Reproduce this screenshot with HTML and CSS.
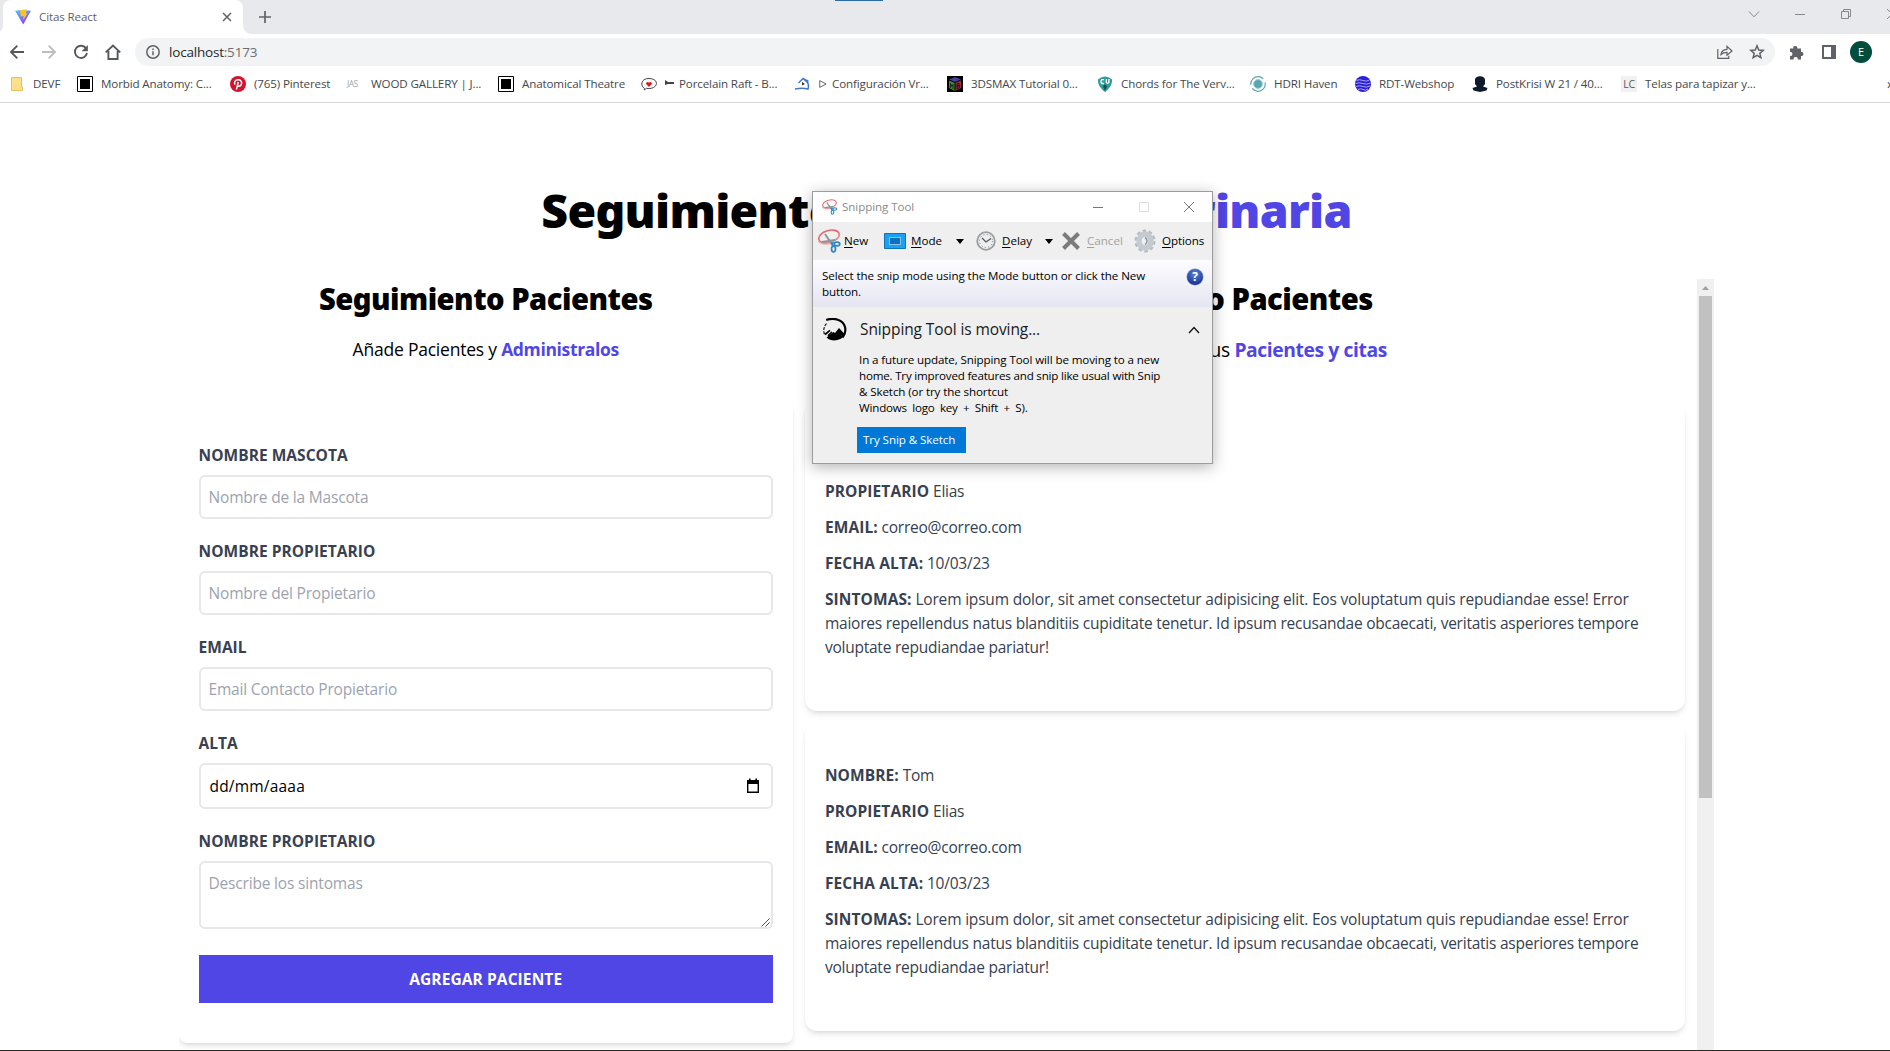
FILE: index.html
```html
<!DOCTYPE html>
<html lang="es">
<head>
<meta charset="utf-8">
<title>Citas React</title>
<link rel="stylesheet" href="styles.css">
</head>
<body>
<div class="screen">

<header class="browser">
  <div class="tabstrip">
    <div class="tab">
      <svg class="i16" viewBox="0 0 16 16"><defs><linearGradient id="vg" x1="0" y1="0" x2=".6" y2="1"><stop offset="0" stop-color="#41d1ff"/><stop offset="1" stop-color="#a335f0"/></linearGradient></defs><path d="M0 1.8 7 .9l9 .9L8.2 15.6z" fill="url(#vg)"/><path d="M5 1.2 11.5.2 11 4.4l1.3.2L8.3 11 8.5 7 5.8 7.4z" fill="#ffc21e"/></svg>
      <span class="tab-title">Citas React</span>
      <svg class="tab-close" viewBox="0 0 10 10"><path d="M1 1l8 8M9 1 1 9"/></svg>
    </div>
    <svg class="newtab" viewBox="0 0 12 12"><path d="M6 0v12M0 6h12"/></svg>
    <div class="strip-mark"></div>
    <div class="winbtns">
      <svg viewBox="0 0 12 12"><path d="M1 3.5 6 8.8l5-5.3"/></svg>
      <svg viewBox="0 0 12 12"><path d="M1 6.5h10"/></svg>
      <svg viewBox="0 0 12 12"><path d="M1.5 3.5h7v7h-7zM3.5 3.5v-2h7v7h-2"/></svg>
      <svg viewBox="0 0 12 12"><path d="M1 1l10 10M11 1 1 11"/></svg>
    </div>
  </div>

  <div class="toolbar">
    <div class="nav">
      <svg viewBox="0 0 16 16"><path d="M15 8H2M8.3 1.6 2 8l6.3 6.4"/></svg>
      <svg class="off" viewBox="0 0 16 16"><path d="M1 8h13M7.7 1.6 14 8l-6.3 6.4"/></svg>
      <svg viewBox="0 0 16 16"><path d="M13.2 4.6A6.1 6.1 0 1 0 14 9"/><path class="solid" d="M14.8 1v6.2H8.6z"/></svg>
      <svg viewBox="0 0 16 16"><path d="M.8 8.4 8 1.6l7.2 6.8M3.4 7v8h9.2V7"/></svg>
    </div>
    <div class="omnibox">
      <svg class="info" viewBox="0 0 14 14"><circle cx="7" cy="7" r="6.2"/><path d="M7 6.2v4M7 3.6v1.5"/></svg>
      <span class="url">localhost<i>:5173</i></span>
      <svg class="share" viewBox="0 0 16 16"><path d="M.8 5v9.3h11v-2.5M4 10.5c.4-3.4 2.4-5 6-5.2V2.4L15 7l-5 4.2V8.4C7.300 8.400 5.500 9 4 10.500z"/></svg>
      <svg class="star" viewBox="0 0 16 16"><path d="m8 1.800 1.750 4.200 4.500.380-3.420 2.950 1.050 4.400L8 11.380l-3.880 2.350 1.050-4.400L1.750 6.380l4.500-.380z"/></svg>
    </div>
    <svg class="puzzle" viewBox="0 0 15 15"><path d="M1 3.500h3.300a2 2 0 1 1 3.900 0H12v3.600a2 2 0 1 1 0 3.900v3.500H8.600a2 2 0 1 0-3.900 0H1v-3.600a2 2 0 1 0 0-3.900z"/></svg>
    <svg class="panel" viewBox="0 0 14 14"><path d="M1 1h12v12H1z" fill="none" stroke="#5f6368" stroke-width="2"/><path d="M9 1h4v12H9z" fill="#5f6368"/></svg>
    <div class="avatar">E</div>
  </div>

  <nav class="bookmarks">
    <a><svg class="i16" viewBox="0 0 16 16"><path d="M2.500 1.500h10v9.500h1v3.500h-11z" fill="#ffe08a" stroke="#e6c15c"/></svg>DEVF</a>
    <a><svg class="i16" viewBox="0 0 16 16"><path d="M.5.5h15v15H.5z" fill="#fff" stroke="#000"/><path d="M3 3h10v10H3z"/></svg>Morbid Anatomy: C...</a>
    <a><svg class="i16" viewBox="0 0 16 16"><circle cx="8" cy="8" r="8" fill="#d4122e"/><path d="M5.200 8.600C3.600 6.600 5 3.800 8.200 3.800c2.500 0 3.700 1.700 3.400 3.600-.3 2-1.600 3-2.800 2.800-.7-.1-1.100-.5-1.300-.9M8.300 6 6.400 13.500" fill="none" stroke="#fff" stroke-width="1.500"/></svg>(765) Pinterest</a>
    <a><span class="i16 jas">JAS</span>WOOD GALLERY | J...</a>
    <a><svg class="i16" viewBox="0 0 16 16"><path d="M.5.5h15v15H.5z" fill="#fff" stroke="#000"/><path d="M3 3h10v10H3z"/></svg>Anatomical Theatre</a>
    <a><svg class="i16" viewBox="0 0 16 16"><path d="M3.500 12.500C-1 9.500-.2 2.500 8 2.500s9.500 6.500 4.500 9c-2.500 1.300-5 1.200-7 .8L3.200 14z" fill="#fff" stroke="#444"/><path d="M8 11 5.300 8.200C4.400 6.600 6.800 5 8 6.800 9.200 5 11.600 6.600 10.700 8.200z" fill="#e01818"/></svg><span><svg class="dart" viewBox="0 0 9 6"><path d="M0 0l3 2h6v2H3L0 5z"/></svg>Porcelain Raft - B...</span></a>
    <a><svg class="i16" viewBox="0 0 16 16"><path d="M0 13c5-1 9-1 13 0 .8-3 .5-5-.5-6.500L8 2.500 3.500 7M8 2.500l5.500 3" fill="none" stroke="#3f78cf" stroke-width="1.500"/><path d="M7 6l3 2-3 1.500z" fill="#333"/></svg><span><svg class="tri" viewBox="0 0 9 10"><path d="M.8 1.200v7.600L8 5z"/></svg>Configuración Vr...</span></a>
    <a><svg class="i16" viewBox="0 0 16 16"><path d="M0 0h16v16H0z"/><path d="M8 1l6 2.500L8 6 2 3.500z" fill="#4540a0"/><path d="M2 4.500l5.500 2.300V15L2 12z" fill="#3d8a3a"/><path d="M8.500 6.800 14 4.500V12l-5.500 3z" fill="#a02a3a"/><path d="M3.500 12V7.500l1.200 3 1.300-2V13M10 13V8l2-.8v2l-2 1 2.500-.5v2z" fill="none" stroke="#111" stroke-width=".8"/></svg>3DSMAX Tutorial 0...</a>
    <a><svg class="i16" viewBox="0 0 16 16"><path d="M1 3.500Q8-2.500 15 3.500C15.500 8.500 12 13 8 16 4 13 .5 8.500 1 3.500z" fill="#2d9e97"/><path d="M7 3.600H4.800L4 5v1.500l1 1h2M9.300 3v3.500l1.200 1 1.400-1V3" fill="none" stroke="#fff" stroke-width="1.300"/><path d="M8 15l-2-5 2-1.500L10 10z" fill="#164b52"/></svg>Chords for The Verv...</a>
    <a><svg class="i16" viewBox="0 0 16 16"><circle cx="8" cy="8" r="7.300" fill="none" stroke="#5aa5b3" stroke-width="1.200" stroke-dasharray="18 4"/><circle cx="8" cy="8" r="4.400" fill="#5aa5b3" stroke="#9dcbd3"/></svg>HDRI Haven</a>
    <a><svg class="i16" viewBox="0 0 16 16"><circle cx="8" cy="8" r="8" fill="#2a1fd8"/><path d="M1.500 4.500q3-1.500 6.500 0t6.500-.5M.5 7.500q4-1.500 7.500 0t7.500-.5M1 10.500q3.500-1.500 7 0t7-.5M3 13.500q2.500-1.500 5 0t5-.5" fill="none" stroke="#b9b6ff" stroke-width=".9"/></svg>RDT-Webshop</a>
    <a><svg class="i16" viewBox="0 0 16 16"><path d="M3 4C3-1 13-1 13 4v4l-2 2.500 4.500 1.500-1 2.500-6.500 1.500-6.500-1.500L.5 12 5 10.500 3 8z" fill="#0d1b2a"/></svg>PostKrisi W 21 / 40...</a>
    <a><span class="i16 lc">LC</span>Telas para tapizar y...</a>
    <span class="more">»</span>
  </nav>
</header>

<main class="container">
  <h1>Seguimiento Pacientes <span>Veterinaria</span></h1>
  <div class="columns">
    <section class="left">
      <h2>Seguimiento Pacientes</h2>
      <p class="lead">Añade Pacientes y <b>Administralos</b></p>
      <form class="card form">
        <label>Nombre mascota</label>
        <div class="field ph">Nombre de la Mascota</div>
        <label>Nombre propietario</label>
        <div class="field ph">Nombre del Propietario</div>
        <label>Email</label>
        <div class="field ph">Email Contacto Propietario</div>
        <label>Alta</label>
        <div class="field date">dd/mm/aaaa<svg viewBox="0 0 14 16"><path d="M1.700 3.500h10.600v10.800H1.700z" fill="none" stroke="#000" stroke-width="1.400"/><path d="M1 2h12v4H1zM3 .500h1.600V3H3zM9.400.500H11V3H9.400z"/></svg></div>
        <label>Nombre propietario</label>
        <div class="field area ph">Describe los sintomas<svg viewBox="0 0 9 9"><path d="M.5 8.500l8-8M4.500 8.500l4-4"/></svg></div>
        <button type="button" class="submit">Agregar paciente</button>
      </form>
    </section>

    <section class="right">
      <div class="list">
        <h2>Listado Pacientes</h2>
        <p class="lead big">Administra tus <b>Pacientes y citas</b></p>
        <article class="card patient">
          <p><b>Nombre:</b> Tom</p>
          <p><b>Propietario</b> Elias</p>
          <p><b>Email:</b> correo@correo.com</p>
          <p><b>Fecha alta:</b> 10/03/23</p>
          <p><b>Sintomas:</b> <span>Lorem ipsum dolor, sit amet consectetur adipisicing elit. Eos voluptatum quis repudiandae esse! Error</span><br>maiores repellendus natus blanditiis cupiditate tenetur. Id ipsum recusandae obcaecati, veritatis asperiores tempore<br>voluptate repudiandae pariatur!</p>
        </article>
        <article class="card patient">
          <p><b>Nombre:</b> Tom</p>
          <p><b>Propietario</b> Elias</p>
          <p><b>Email:</b> correo@correo.com</p>
          <p><b>Fecha alta:</b> 10/03/23</p>
          <p><b>Sintomas:</b> <span>Lorem ipsum dolor, sit amet consectetur adipisicing elit. Eos voluptatum quis repudiandae esse! Error</span><br>maiores repellendus natus blanditiis cupiditate tenetur. Id ipsum recusandae obcaecati, veritatis asperiores tempore<br>voluptate repudiandae pariatur!</p>
        </article>
      </div>
      <div class="scrollbar">
        <svg viewBox="0 0 17 17"><path d="M5 11l3.500-4L12 11z" fill="#a0a0a0"/></svg>
        <div class="thumb"></div>
      </div>
    </section>
  </div>
</main>
<div class="taskbar"></div>

<svg class="defs">
  <symbol id="snip" viewBox="0 0 24 24"><g fill="none"><ellipse cx="12" cy="7.500" rx="10.500" ry="6" transform="rotate(-16 12 7.500)" stroke="#e8696d" stroke-width="1.600"/><path d="M22 4c1 4-3 8-9 9.500-5 1-10 .5-12-1.500 2 3 8 4.500 14 2" stroke="#f0a0a2"/><path d="M8 5l8 12M5 13l13-2" stroke="#8d9499" stroke-width="1.900"/><ellipse cx="16.500" cy="20" rx="2" ry="2.800" stroke="#2b86c8" stroke-width="1.700"/><ellipse cx="20" cy="15" rx="2.800" ry="1.900" stroke="#2b86c8" stroke-width="1.700"/><path d="M14.500 14l2 3.500M14 14h4" stroke="#2b86c8" stroke-width="1.500"/></g></symbol>
</svg>

<div class="snip">
  <div class="snip-title">
    <svg class="s16"><use href="#snip"/></svg>
    <span>Snipping Tool</span>
    <svg class="ctl" viewBox="0 0 12 12"><path d="M1 6.500h10"/></svg>
    <svg class="ctl dim" viewBox="0 0 12 12"><path d="M1.500 1.500h9v9h-9z"/></svg>
    <svg class="ctl" viewBox="0 0 12 12"><path d="M1 1l10 10M11 1 1 11"/></svg>
  </div>
  <div class="snip-tools">
    <svg class="s24"><use href="#snip"/></svg><span class="t-new"><u>N</u>ew</span>
    <svg class="mode" viewBox="0 0 22 16"><path d="M.5.5h21v15H.5z" fill="#1ba1f2" stroke="#1173b5"/><path d="M5.500 4.500h11v7h-11z" fill="#0f6fc0" stroke="#fff" stroke-dasharray="1 1"/></svg><span class="t-mode"><u>M</u>ode</span><i class="caret"></i>
    <svg class="clock" viewBox="0 0 20 20"><circle cx="10" cy="10" r="8.800" fill="#eceeef" stroke="#9b9fa2" stroke-width="1.800"/><circle cx="10" cy="10" r="6.500" fill="none" stroke="#777" stroke-dasharray="1 2.400"/><path d="M6 7l4 4 5-3.500" fill="none" stroke="#555" stroke-width="1.200"/></svg><span class="t-delay"><u>D</u>elay</span><i class="caret"></i>
    <svg class="cross" viewBox="0 0 18 18"><path d="M1.500 1.500l15 15M16.500 1.500l-15 15"/></svg><span class="t-cancel"><u>C</u>ancel</span>
    <svg class="gear" viewBox="0 0 22 24"><ellipse cx="11" cy="12" rx="9.300" ry="10.300" fill="none" stroke="#b3bbc2" stroke-width="2.400" stroke-dasharray="3.600 2.600"/><ellipse cx="11" cy="12" rx="6" ry="7" fill="#eef0f2" stroke="#c3cad0" stroke-width="5.400"/><path d="M11 8.500a4 4 0 0 1 0 7" stroke="#8d959c" stroke-width="1.500" fill="none"/></svg><span class="t-opt"><u>O</u>ptions</span>
  </div>
  <div class="snip-msg">
    <p>Select the snip mode using the Mode button or click the New<br>button.</p>
    <span class="help">?</span>
  </div>
  <div class="snip-body">
    <svg class="sketch" viewBox="0 0 24 23"><path d="M3.200 2C11-.5 20 1.500 22 9c1 4-.5 8-2.500 10.500" fill="none" stroke="#000" stroke-width="2.200"/><path d="M3.500 5.500C.5 9 .3 13 1.500 16.500" fill="none" stroke="#000" stroke-width="1.100" stroke-dasharray="3 1.200"/><path d="M3.500 19.500 10.500 14l1.500 1L16 10l6 6.500C18 23.500 8 24 3.500 19.500z"/><path d="M2 16.500l5-4.200M5 17.800l4-3.800" stroke="#000" stroke-width="1.700"/></svg>
    <div class="snip-copy">
      <h3>Snipping Tool is moving...</h3>
      <p><span class="wide">In a future update, Snipping Tool will be moving to a new</span><br>home. Try improved features and snip like usual with Snip<br><span class="wide">&amp; Sketch (or try the shortcut</span><br><span class="keys">Windows logo key + Shift + S).</span></p>
      <button type="button">Try Snip &amp; Sketch</button>
    </div>
    <svg class="up" viewBox="0 0 12 8"><path d="M1 7l5-5.500L11 7"/></svg>
  </div>
</div>

</div>
</body>
</html>
```
FILE: styles.css
```css
* { box-sizing: border-box; margin: 0; padding: 0; }
body { background: #fff; overflow: hidden; font-family: "Open Sans", "Noto Sans", sans-serif; }
.screen { position: relative; width: 1890px; height: 1051px; overflow: hidden; display: flex; flex-direction: column; }
svg { display: block; flex: none; }
.defs { position: absolute; width: 0; height: 0; }

/* Browser chrome */
.browser { height: 103px; flex: none; border-bottom: 1px solid #d6d8da; font-size: 11.6px; letter-spacing: -.13px; color: #45494d; }
.tabstrip { height: 34px; background: #e8e9ed; display: flex; padding-left: 3px; position: relative; }
.tab { width: 240px; background: #fff; border-radius: 8px 8px 0 0; display: flex; align-items: center; padding: 0 11px 0 12px; position: relative; }
.tab::before, .tab::after { content: ""; position: absolute; bottom: 0; width: 8px; height: 8px; }
.tab::before { left: -8px; background: radial-gradient(circle at 0 0, transparent 7.500px, #fff 8px); }
.tab::after { right: -8px; background: radial-gradient(circle at 100% 0, transparent 7.500px, #fff 8px); }
.i16 { width: 16px; height: 16px; flex: none; }
.tab-title { margin-left: 8px; flex: 1; color: #5f6368; line-height: 32px; }
.tab-close { width: 10px; height: 10px; stroke: #5f6368; stroke-width: 1.500; }
.newtab { width: 12px; height: 12px; margin: 11px 0 0 16px; stroke: #5f6368; stroke-width: 1.700; }
.strip-mark { position: absolute; left: 835px; top: 0; width: 48px; height: 1px; background: #2a6cab; }
.winbtns { display: flex; gap: 34px; margin: 8px -8px 0 auto; }
.winbtns svg { width: 12px; height: 12px; fill: none; stroke: #85888c; }

.toolbar { height: 36px; display: flex; align-items: center; padding-left: 9px; }
.nav { display: flex; gap: 16px; width: 126px; flex: none; }
.nav svg { width: 16px; height: 16px; fill: none; stroke: #55595e; stroke-width: 1.900; }
.nav .off { stroke: #bcbec1; }
.nav .solid { fill: #55595e; stroke: none; }
.omnibox { width: 1640px; flex: none; height: 28px; border-radius: 14px; background: #f1f3f4; display: flex; align-items: center; padding: 0 10px 0 11px; }
.info { width: 14px; height: 14px; fill: none; stroke: #5f6368; stroke-width: 1.500; }
.url { margin-left: 9px; flex: 1; font-size: 13.500px; letter-spacing: -.2px; line-height: 28px; color: #26282b; }
.url i { font-style: normal; color: #6a6e72; }
.share, .star { width: 16px; height: 16px; fill: none; stroke: #5f6368; stroke-width: 1.200; }
.star { margin-left: 16px; stroke-width: 1.500; }
.puzzle { width: 15px; height: 15px; margin-left: 14px; fill: #5f6368; }
.panel { width: 14px; height: 14px; margin-left: 18px; }
.avatar { width: 22px; height: 22px; flex: none; border-radius: 50%; background: #034d3c; color: #fff; text-align: center; line-height: 22px; font-size: 11px; margin-left: 14px; }

.bookmarks { height: 30px; margin-top: -1px; padding-left: 9px; display: grid; align-items: center; white-space: nowrap; line-height: 30px;
  grid-template-columns: 68px 153px 117px 151px 143px 154px 152px 150px 153px 105px 117px 149px 266px 20px; }
.bookmarks a { display: flex; align-items: center; gap: 8px; }
.bookmarks .dart, .bookmarks .tri { display: inline-block; margin-right: 5px; }
.dart { width: 9px; height: 6px; fill: #444; vertical-align: 2px; }
.tri { width: 8px; height: 10px; fill: none; stroke: #555; vertical-align: -1px; }
.jas { font-size: 8.500px; letter-spacing: -.6px; line-height: 16px; color: #a5a7a9; }
.lc { background: #f1f1f1; color: #55585b; font-size: 10.500px; line-height: 16px; text-align: center; letter-spacing: -.2px; }
.more { font-size: 14px; color: #45494d; }

/* Page */
.container { width: 1536px; margin: 80px 0 0 178.500px; height: 867px; overflow: hidden; flex: none; color: #000; }
h1 { font-family: "Noto Sans", "Open Sans", sans-serif; font-size: 46.500px; font-weight: 900; line-height: 48px; height: 48px; text-align: center; letter-spacing: -.72px; padding-top: 3px; }
h1 span, .lead b { color: #4f46e5; }
.columns { display: flex; margin-top: 48px; }
.left { width: 40%; }
.right { width: 60%; height: 771px; display: flex; overflow: hidden; }
h2 { font-family: "Noto Sans", "Open Sans", sans-serif; font-size: 29.200px; font-weight: 900; line-height: 36px; height: 36px; text-align: center; letter-spacing: -.52px; padding-top: 2px; }
.lead { height: 28px; margin: 20px 0 40px; font-size: 17.500px; line-height: 29px; text-align: center; letter-spacing: -.22px; }
.lead b { letter-spacing: -.35px; }
.big { padding-left: 1px; font-size: 19.300px; letter-spacing: -.4px; }
.big b { letter-spacing: -.4px; }
.card { background: #fff; box-shadow: 0 4px 6px -1px rgba(0,0,0,.1), 0 2px 4px -2px rgba(0,0,0,.1); padding: 40px 20px; }
.form { border-radius: 8px; height: 640px; display: flex; flex-direction: column; }
label { font-size: 15.500px; font-weight: 700; line-height: 25px; height: 24px; letter-spacing: .04px; color: #374151; text-transform: uppercase; }
.field { height: 44px; flex: none; margin: 8px 0 20px; border: 2px solid #e5e7eb; border-radius: 6px; padding: 8px; font-size: 15.500px; line-height: 25px; letter-spacing: -.18px; color: #000; display: flex; justify-content: space-between; }
.ph { color: #9ca3af; }
.date { height: 46px; letter-spacing: .2px; padding: 9px 11px 9px 9px; }
.date svg { width: 14px; height: 16px; margin-top: 4px; }
.area { height: 68px; margin-bottom: 26px; padding-right: 1px; align-items: flex-start; }
.area svg { width: 9px; height: 9px; align-self: flex-end; margin-bottom: -8px; stroke: #555; fill: none; }
.submit { height: 48px; flex: none; border: 0; background: #4f46e5; color: #fff; font: 700 15.500px/24px "Open Sans", sans-serif; letter-spacing: .1px; text-transform: uppercase; }
.list { flex: 1; min-width: 0; }
.patient { margin: 12px; height: 308px; border-radius: 12px; color: #374151; font-size: 15.500px; line-height: 24px; letter-spacing: -.235px; white-space: nowrap; }
.patient p { margin-bottom: 12px; }
.patient b { letter-spacing: .1px; text-transform: uppercase; }
.patient span { letter-spacing: -.19px; }
.lead + .patient { margin-top: 0; }
.scrollbar { width: 17px; background: #f0f0f0; display: flex; flex-direction: column; align-items: center; }
.scrollbar svg { width: 17px; height: 17px; }
.thumb { width: 13px; height: 502px; background: #c1c1c1; }
.taskbar { height: 1px; background: #2b2b26; flex: none; }

/* Snipping window */
.snip { position: absolute; left: 812px; top: 191px; width: 401px; height: 273px; border: 1px solid #9c9c9c; background: #efefef; box-shadow: 0 3px 14px rgba(0,0,0,.3); font-size: 11.600px; letter-spacing: -.08px; color: #000; }
.snip-title { height: 30px; background: #fff; display: flex; align-items: center; padding: 0 17px 1px 8px; color: #8c8c8c; }
.s16 { width: 17px; height: 16px; }
.snip-title span { flex: 1; margin-left: 4px; line-height: 29px; }
.ctl { width: 12px; height: 12px; margin-left: 33.500px; fill: none; stroke: #777; }
.dim { stroke: #ddd; }
.snip-tools { height: 38px; display: flex; align-items: center; padding-left: 4px; line-height: 38px; white-space: nowrap; letter-spacing: 0; }
.s24 { width: 24px; height: 24px; }
.snip-tools span { display: block; }
.snip-tools u { text-underline-offset: 2px; }
.t-new { width: 40px; margin-left: 3px; }
.mode { width: 22px; height: 16px; }
.t-mode { width: 45px; margin-left: 5px; }
.caret { width: 0; height: 0; border: 4px solid transparent; border-top: 5px solid #000; border-bottom: 0; }
.clock { width: 20px; height: 20px; margin-left: 12px; }
.t-delay { width: 43px; margin-left: 6px; }
.cross { width: 18px; height: 18px; margin-left: 9px; stroke: #7b7b7b; stroke-width: 4; }
.t-cancel { width: 40px; margin-left: 7px; color: #a2a2a2; }
.gear { width: 22px; height: 24px; margin-left: 7px; }
.t-opt { margin-left: 6px; letter-spacing: -.1px; }
.snip-msg { height: 47px; background: linear-gradient(#fdfdff, #e5e5f2); padding: 8px 9px 0 9px; display: flex; justify-content: space-between; line-height: 16px; white-space: nowrap; }
.help { width: 16px; height: 16px; border-radius: 50%; background: radial-gradient(circle at 50% 30%, #5a83dd, #1c3797 75%); box-shadow: 0 0 0 .5px #8b95b5; color: #fff; font-weight: 700; font-size: 12px; text-align: center; line-height: 16px; margin-top: 1px; }
.snip-body { display: flex; padding: 10px 12px 0 10px; }
.sketch { width: 24px; height: 23px; margin-top: 1px; }
.snip-copy { flex: 1; padding-left: 12px; white-space: nowrap; }
h3 { font-size: 15.500px; font-weight: 400; line-height: 24px; letter-spacing: -.1px; color: #1a1a1a; margin-left: 1px; }
.snip-copy p { margin-top: 11px; line-height: 16px; letter-spacing: -.2px; }
.wide { letter-spacing: -.11px; }
.keys { word-spacing: 2.500px; }
.snip-copy button { display: block; width: 109px; height: 26px; margin: 11px 0 0 -2px; border: 0; background: #0078d7; color: #fff; font: 11.600px/26px "Open Sans", sans-serif; letter-spacing: -.08px; text-align: left; padding-left: 6px; }
.up { width: 12px; height: 8px; margin-top: 9px; fill: none; stroke: #111; stroke-width: 1.300; }
```
